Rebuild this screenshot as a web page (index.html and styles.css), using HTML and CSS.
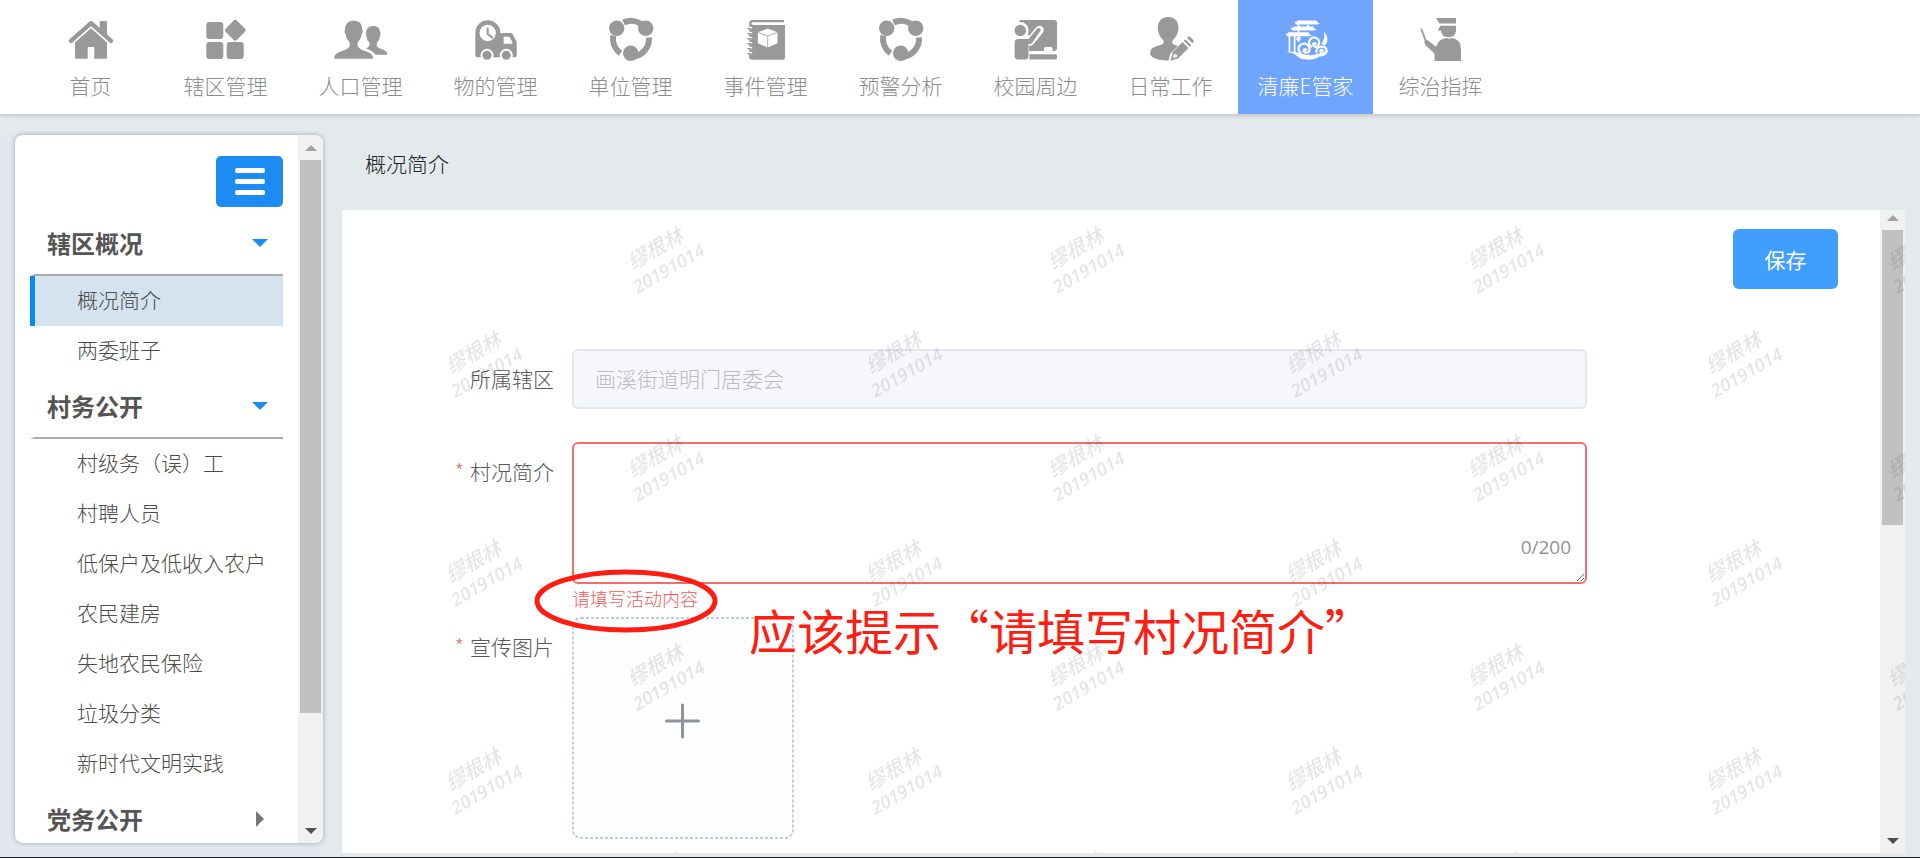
FILE: index.html
```html
<!DOCTYPE html>
<html lang="zh-CN">
<head>
    <meta charset="utf-8">
    <title>概况简介</title>
    <link rel="stylesheet" href="styles.css">
</head>
<body>
    <nav class="topnav">
        <a class="nav-item" href="#">
            <svg class="nav-icon" viewBox="0 0 48 48">
                <path d="M4 24.800 24 7.200l20 17.600" fill="none" stroke="currentColor" stroke-width="4.400" stroke-linecap="round" stroke-linejoin="round"/>
                <path d="M32.700 5.800q0-.8.8-.8h5.700q.8 0 .8.8V19l-7.300-6.300z"/>
                <path d="M24 12.300 40 26.500V41.500q0 1.200-1.200 1.200H27.300V31H20.700v11.700H9.200Q8 42.700 8 41.500V26.500z"/>
            </svg>
            <span>首页</span>
        </a>
        <a class="nav-item" href="#">
            <svg class="nav-icon" viewBox="0 0 48 48">
                <rect x="4.300" y="6" width="17" height="17" rx="3"/>
                <rect x="4.300" y="26" width="17" height="17" rx="3"/>
                <rect x="24.700" y="26" width="17" height="17" rx="3"/>
                <rect x="25.300" y="6.300" width="16" height="16" rx="2.500" transform="rotate(45 33.300 14.300)"/>
            </svg>
            <span>辖区管理</span>
        </a>
        <a class="nav-item" href="#">
            <svg class="nav-icon" viewBox="0 0 48 48">
                <path d="M-2.700 42.700v-1.500c.5-5.500 10.200-6 13.700-9 2.500-2 2.300-4.500.8-7C9.500 23 9 20.500 8.700 18c-1.500-1.500-1-3.500-.6-5.500C8.300 7 12 4.700 16.700 4.700S25 7 25.200 12.500c.5 2 1 4-.5 5.500-.3 2.500-.9 5-3.200 7.200-1.500 2.500-1.600 5 .9 7 3.500 3 13.100 3.500 13.600 9v1.500z"/>
                <path d="M38.500 38.700c-2-3-5.500-4.700-9.500-6.200 3-1.500 4.500-3 3-6.500-2-1.500-2.200-4-2.400-5.800-1-1-.8-2.500-.4-3.700C29.400 12 32.500 10 36.200 10s6.800 2 7 6.500c.4 1.200.6 2.700-.4 3.700-.2 1.800-.6 4.300-2.400 5.800-1.500 3.500-.4 5.200 2 6.200 3.900 1.600 7.500 2.300 7.900 5.500v1z"/>
            </svg>
            <span>人口管理</span>
        </a>
        <a class="nav-item" href="#">
            <svg class="nav-icon" viewBox="0 0 48 48">
                <path d="M3.300 39.500V16.500a12.500 12.500 0 0 1 25 .5h10.200q1.500 0 2.200 1.300l4 7.400V39.500q0 1.800-1.800 1.800H5.100q-1.800 0-1.800-1.800z"/>
                <g class="cut">
                    <circle cx="15.700" cy="17" r="8.200"/>
                    <path d="M31.700 20.700h5.600l3 5v2h-8.600z"/>
                    <circle cx="15" cy="39.300" r="6.500"/>
                    <circle cx="34.300" cy="39.300" r="6.500"/>
                </g>
                <circle cx="15" cy="39.300" r="4.500"/>
                <circle cx="34.300" cy="39.300" r="4.500"/>
                <path d="M15.700 12.500V18l4.600 3.600" fill="none" stroke="currentColor" stroke-width="2" stroke-linecap="round"/>
            </svg>
            <span>物的管理</span>
        </a>
        <a class="nav-item" href="#">
            <svg class="nav-icon" viewBox="0 0 48 48">
                <g id="ring">
                    <path d="M16.500 6.500A18 18 0 0 1 36 9.500M42 21.500A18 18 0 0 1 27 40.600M6.200 19.500A18 18 0 0 0 13.500 37.300" fill="none" stroke="currentColor" stroke-width="6"/>
                    <circle cx="9.700" cy="12.300" r="7.700"/>
                    <circle cx="38.700" cy="12.300" r="7.700"/>
                    <circle cx="23.700" cy="37.300" r="7.700"/>
                </g>
            </svg>
            <span>单位管理</span>
        </a>
        <a class="nav-item" href="#">
            <svg class="nav-icon" viewBox="0 0 48 48">
                <path d="M42 4H10.500Q7.200 4 7.200 7.500V41q0 2.700 2.700 2.700H41q2 0 2-2V9H11.500q-2.200 0-2.200-1.400 0-1.400 2.200-1.400H42z"/>
                <g class="cut">
                    <path d="m25.700 12.500 9.800 3.800v11l-9.800 4.300-9.800-4.300v-11z"/>
                    <path d="M5 12h4M5 17h4M5 22h4M5 27h4M5 32h4M5 37h4" fill="none" stroke="#fff" stroke-width="2.600" stroke-linecap="round"/>
                </g>
                <path d="M15.900 16.300l9.800 3.800 9.800-3.800M25.700 20.100v11.500" fill="none" stroke="currentColor" stroke-width=".8"/>
                <path d="M6 12.800h3M6 17.800h3M6 22.800h3M6 27.800h3M6 32.800h3M6 37.800h3" fill="none" stroke="currentColor" stroke-width="1.500" stroke-linecap="round"/>
            </svg>
            <span>事件管理</span>
        </a>
        <a class="nav-item" href="#">
            <svg class="nav-icon" viewBox="0 0 48 48"><use href="#ring"/></svg>
            <span>预警分析</span>
        </a>
        <a class="nav-item" href="#">
            <svg class="nav-icon" viewBox="0 0 48 48">
                <path d="M7 5q1-1 2.500-1H42q3 0 3 3v25q0 3-3 3H17V20z"/>
                <path d="M17.500 38.300H43.500q1.500 0 1.500 1.500v2.200q0 1.500-1.500 1.500H17.500z"/>
                <g class="cut">
                    <circle cx="8.300" cy="14.500" r="8.400"/>
                    <path d="M32 32.500q0-1.500 1.500-1.500H39q1.500 0 1.500 1.500V35H32z"/>
                    <path d="M8 25.500h10L27.500 14" fill="none" stroke="#fff" stroke-width="8.500" stroke-linecap="round" stroke-linejoin="round"/>
                </g>
                <circle cx="8.300" cy="14.500" r="5.800"/>
                <path d="M2.600 26.500q0-3.500 3.500-3.500h10.500L25 12.700q1.300-1.300 2.900-.2 1.400 1 .4 2.600L20.500 26.500q-1 1.500-2.800 1.500h-1.200v12q0 3.500-3.500 3.500H6.100q-3.500 0-3.500-3.500z"/>
            </svg>
            <span>校园周边</span>
        </a>
        <a class="nav-item" href="#">
            <svg class="nav-icon" viewBox="0 0 48 48">
                <path d="M21.200 1c6.500 0 10.300 4.300 10.300 10.500 0 5.500-2.600 9.500-5.500 12.500-1.700 2-.5 4 1.500 4.700l3.500 1.300-7.500 7.500-2 7q-10.500 0-16-3.300C3 39.500 3 37.500 3.500 35c1-4.500 7.500-4.800 11.500-6.500 2-1 2.400-3 .8-4.700-3-3-5-7-5-12.300C10.800 5.300 14.800 1 21.200 1z"/>
                <path d="m25.500 36.500 10-10.500 6 6-10.500 10.500-7.500 2.300z"/>
                <path d="m36.800 24.700 1.500-1.500 6 6-1.500 1.500zM39.800 21.700l1.400-1q1-.8 2 .2l3 3q1 1 .2 2l-1 1.400z"/>
                <path class="cut" d="m26.700 38 3 .4.500 2.400-3 1.300-1.500-1.500z"/>
            </svg>
            <span>日常工作</span>
        </a>
        <a class="nav-item active" href="#">
            <svg class="nav-icon" viewBox="0 0 48 48">
                <path d="M12.500 5.700h2l1-1.200h19l1.300 2.200 2.200.8-2 1H14zM8.500 11.800h2.500l1-1.400h19l1.200 2.200 2.300.8-2 1H10zM3.500 17.700h2l1-1.400h20l1.300 2.200 2 .8-2 1H5z"/>
                <path d="M7.500 20v16M12.600 20v16M16.500 6v18M26 9v3" fill="none" stroke="currentColor" stroke-width="1.800"/>
                <path d="M14.500 21h4v2.500l-2 3-2-3z"/>
                <path d="M2 35.500c6 .8 10-.8 16 1.500 7 2.500 12 3 16 1 4-.5 9-.5 12-4-1 6-5 6.500-9 6.500-3.500 4-18 4.500-22-.5-3-3-7-3.500-13-4.500z"/>
                <path d="M18.500 36.500a5.500 5 0 1 1 9-3q0 3.500-3.500 3.200-3-.5-2-3 1.200-1.500 2.300.2M29 30.500a5 5 0 1 1 7.500-1.500q-1.500 2.500-4 1.500-2.200-1.500-.8-3.200 1.500-.8 2 .8M34.500 36q-.5-5 5-5.500 5.500.5 5 4.500-1.500 3.500-4.500 2.500-2.500-1.500-1.200-3.300 1.700-.8 2 .8" fill="none" stroke="currentColor" stroke-width="2.200" stroke-linecap="round"/>
                <path d="M42 15.500c5 6 4 11.500.5 14l-3.500-1.500c3-3 4-7 3-12.500z"/>
            </svg>
            <span>清廉E管家</span>
        </a>
        <a class="nav-item" href="#">
            <svg class="nav-icon" viewBox="0 0 48 48">
                <path d="M19 2h20v5.500H22.500zM23.500 9.700H39v5q-.5 6.500-7.500 6.500T24 14.500h-3.500z"/>
                <path d="M8 24.500q2-1.200 3.500.3l7.500 6q2.500-7.800 10-8.800l3 .8 3-.8q9 1.500 9 11.500V45H17.500V37.500L9 29.500Q6.500 27 8 24.500z"/>
                <path d="m4.500 13.500 4 11" fill="none" stroke="currentColor" stroke-width="1.800" stroke-linecap="round"/>
            </svg>
            <span>综治指挥</span>
        </a>
    </nav>

    <div class="page">
        <div class="side-wrap">
            <aside class="sidebar">
                <div class="menu">
                    <button class="menu-toggle" type="button" aria-label="菜单"><i></i><i></i><i></i></button>
                    <div class="menu-title open">辖区概况</div>
                    <a class="menu-item active" href="#">概况简介</a>
                    <a class="menu-item" href="#">两委班子</a>
                    <div class="menu-title open">村务公开</div>
                    <a class="menu-item" href="#">村级务（误）工</a>
                    <a class="menu-item" href="#">村聘人员</a>
                    <a class="menu-item" href="#">低保户及低收入农户</a>
                    <a class="menu-item" href="#">农民建房</a>
                    <a class="menu-item" href="#">失地农民保险</a>
                    <a class="menu-item" href="#">垃圾分类</a>
                    <a class="menu-item" href="#">新时代文明实践</a>
                    <div class="menu-title closed">党务公开</div>
                </div>
                <div class="scrollbar">
                    <div class="arrow up"></div>
                    <div class="track"><div class="thumb thumb-side"></div></div>
                    <div class="arrow down"></div>
                </div>
            </aside>
        </div>

        <main class="main">
            <h1 class="page-title">概况简介</h1>
            <div class="panel">
                <form class="form">
                    <div class="toolbar">
                        <button class="btn-save" type="button">保存</button>
                    </div>
                    <div class="form-item">
                        <label for="area">所属辖区</label>
                        <input class="field" type="text" id="area" value="画溪街道明门居委会" disabled>
                    </div>
                    <div class="form-item required">
                        <label for="intro">村况简介</label>
                        <div class="textarea-box">
                            <textarea class="field" id="intro" maxlength="200"></textarea>
                            <span class="count">0/200</span>
                            <span class="error">请填写活动内容</span>
                        </div>
                    </div>
                    <div class="form-item required">
                        <label for="upload">宣传图片</label>
                        <button class="upload" type="button" id="upload">
                            <svg viewBox="0 0 222 222">
                                <rect x="1" y="1" width="220" height="220" rx="8"/>
                                <path d="M110.500 88v32M94.500 104h32"/>
                            </svg>
                        </button>
                    </div>
                </form>
                <div class="scrollbar">
                    <div class="arrow up"></div>
                    <div class="track"><div class="thumb thumb-main"></div></div>
                    <div class="arrow down"></div>
                </div>

                <svg class="watermark">
                    <defs>
                        <g id="mark" transform="rotate(-30)">
                            <text x="0" y="0">缪根林</text>
                            <text class="mark-date" x="-8" y="23">20191014</text>
                        </g>
                        <!-- two staggered marks per row, two rows per tile -->
                        <pattern id="tile" width="420" height="417" patternUnits="userSpaceOnUse">
                            <use href="#mark" x="291" y="60"/>
                            <use href="#mark" x="109" y="164"/>
                            <use href="#mark" x="291" y="268"/>
                            <use href="#mark" x="109" y="373"/>
                        </pattern>
                    </defs>
                    <rect width="100%" height="100%" fill="url(#tile)"/>
                </svg>

                <svg class="circle-note" viewBox="0 0 184 64"><ellipse cx="92" cy="32" rx="89" ry="29"/></svg>
                <p class="note">应该提示“请填写村况简介”</p>
            </div>
        </main>
    </div>
</body>
</html>
```
FILE: styles.css
```css
* {
    box-sizing: border-box;
}
body {
    margin: 0;
    height: 100vh;
    display: flex;
    flex-direction: column;
    overflow: hidden;
    background: #e4e9ec;
    border-bottom: 1px solid #1c1c26;
    font-family: "Noto Sans CJK SC", "Noto Sans", sans-serif;
    font-size: 21px;
    font-weight: 300;
    color: #56585c;
}
a {
    color: inherit;
    text-decoration: none;
}
button, input, textarea {
    font: inherit;
}

/* top navigation */
.topnav {
    display: flex;
    flex: none;
    height: 114px;
    padding-left: 23px;
    background: #fff;
    box-shadow: 0 2px 4px rgba(0, 0, 0, 0.15);
    position: relative;
}
.nav-item {
    width: 135px;
    padding-top: 16px;
    display: flex;
    flex-direction: column;
    align-items: center;
    color: #999;
    line-height: 30px;
    white-space: nowrap;
}
.nav-item span {
    margin-top: 6px;
    color: #8c8c8c;
}
.nav-item.active,
.nav-item.active span {
    background: #70a5ff;
    color: #fff;
}
.nav-icon {
    width: 48px;
    height: 48px;
    overflow: visible;
    fill: currentColor;
}
.cut {
    fill: #fff;
}

.page {
    flex: 1;
    min-height: 0;
    display: flex;
}

/* side menu */
.side-wrap {
    flex: none;
    width: 323px;
    margin-top: 20px;
    padding: 1px 0 14px 15px;
    background: #e3e7f0;
}
.sidebar {
    height: 100%;
    display: flex;
    overflow: hidden;
    background: #fff;
    border-radius: 8px;
    box-shadow: 0 0 5px rgba(0, 0, 0, 0.3);
}
.menu {
    flex: 1;
    padding: 21px 15px 0;
    color: #4c4c4a;
}
.menu-toggle {
    display: flex;
    flex-direction: column;
    align-items: center;
    justify-content: center;
    gap: 6px;
    width: 67px;
    height: 51px;
    margin: 0 0 6px auto;
    background: #1c8cf3;
    border: none;
    border-radius: 5px;
}
.menu-toggle i {
    width: 30px;
    height: 5px;
    border-radius: 2px;
    background: #fff;
}
.menu-title {
    display: flex;
    align-items: center;
    justify-content: space-between;
    height: 63px;
    padding: 0 15px 2px 12px;
    border-left: 5px solid transparent;
    border-bottom: 2px solid #aaa;
    font-size: 24px;
    font-weight: bold;
    color: #555;
}
.menu-title::after {
    content: "";
    border: 8px solid transparent;
}
.menu-title.open::after {
    border-top-color: #1c8cf3;
    border-bottom: none;
}
.menu-title.closed::after {
    border-left-color: #777;
    border-right: none;
    margin-right: 4px;
}
.menu-item {
    display: block;
    height: 50px;
    padding-left: 42px;
    border-left: 5px solid transparent;
    line-height: 46px;
    white-space: nowrap;
}
.menu-item.active {
    background: #d5e2ef;
    border-left-color: #018df1;
}

/* scroll bars */
.scrollbar {
    flex: none;
    width: 25px;
    display: flex;
    flex-direction: column;
    align-items: center;
    background: #f1f1f1;
}
.arrow {
    margin: 5px 0 9px;
    border: 6px solid transparent;
}
.arrow.up {
    border-top: none;
    border-bottom-color: #a3a3a3;
}
.arrow.down {
    border-bottom: none;
    border-top-color: #505050;
}
.track {
    flex: 1;
    width: 21px;
}
.thumb {
    background: #c1c1c1;
}
.thumb-side {
    height: 84%;
}
.thumb-main {
    height: 49%;
}
.sidebar .arrow {
    margin-top: 10px;
}

/* content */
.main {
    flex: 1;
    display: flex;
    flex-direction: column;
    padding: 0 15px 4px 19px;
}
.page-title {
    height: 96px;
    margin: 0;
    padding: 33px 23px 0;
    font-size: 21px;
    font-weight: 300;
    line-height: 32px;
    color: #222;
}
.panel {
    position: relative;
    flex: 1;
    min-height: 0;
    display: flex;
    overflow: hidden;
    background: #fff;
}
.form {
    flex: 1;
    padding-top: 19px;
}
.toolbar {
    display: flex;
    justify-content: flex-end;
    padding: 0 42px 60px 0;
}
.btn-save {
    width: 105px;
    height: 60px;
    background: #409eff;
    border: none;
    border-radius: 6px;
    font-weight: 400;
    color: #fff;
}
.form-item {
    display: grid;
    grid-template-columns: 230px 66%;
    align-items: start;
    margin-bottom: 33px;
}
.form-item label {
    padding-right: 18px;
    line-height: 58px;
    text-align: right;
}
.form-item.required label::before {
    content: "*";
    margin-right: 6px;
    color: #f56c6c;
}
.field {
    display: block;
    width: 100%;
    height: 60px;
    padding: 0 21px 2px;
    background: #fff;
    border: 2px solid #e4e7ed;
    border-radius: 6px;
    outline: none;
}
.field:disabled {
    background: #f5f7fa;
    color: #b8bcc4;
}
.textarea-box {
    position: relative;
}
textarea.field {
    height: 142px;
    border-color: #f56c6c;
    resize: vertical;
}
.count {
    position: absolute;
    right: 16px;
    bottom: 22px;
    font-family: "Open Sans", "Noto Sans", sans-serif;
    font-size: 19px;
    font-weight: 400;
    line-height: 30px;
    color: #909399;
}
.error {
    position: absolute;
    top: 100%;
    left: 0;
    font-size: 18px;
    line-height: 28px;
    color: #f55858;
}
.upload {
    width: 222px;
    height: 222px;
    padding: 0;
    background: none;
    border: none;
}
.upload svg {
    display: block;
    fill: none;
}
.upload rect {
    fill: #fbfdff;
    stroke: #c0ccda;
    stroke-width: 2;
    stroke-dasharray: 3 2;
}
.upload path {
    stroke: #8c939d;
    stroke-width: 3;
    stroke-linecap: round;
}

.watermark {
    position: absolute;
    top: 0;
    left: 0;
    width: 100%;
    height: 100%;
    pointer-events: none;
    fill: rgba(0, 0, 0, 0.1);
    font-family: "Noto Sans CJK SC", sans-serif;
    font-size: 20px;
    font-style: italic;
    font-weight: 500;
}
.mark-date {
    font-family: "Open Sans", "Noto Sans", sans-serif;
    font-size: 18px;
    font-weight: 600;
}

/* red review marks over the form */
.circle-note {
    position: absolute;
    top: 359px;
    left: 192px;
    width: 184px;
    height: 64px;
    fill: none;
    stroke: #ff1c10;
    stroke-width: 5;
    pointer-events: none;
}
.note {
    position: absolute;
    top: 384px;
    left: 407px;
    margin: 0;
    font-size: 48px;
    font-weight: 400;
    line-height: 70px;
    color: #ff1c10;
    white-space: nowrap;
}
```
